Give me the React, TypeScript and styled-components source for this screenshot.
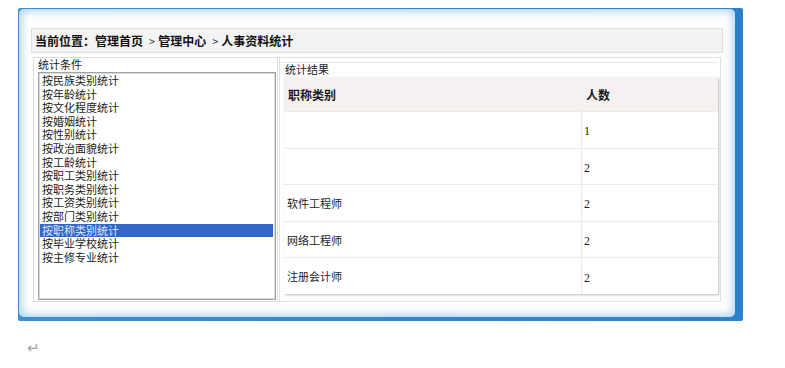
import React from "react";
import styled, { createGlobalStyle } from "styled-components";

const GlobalStyle = createGlobalStyle`
  body {
    margin: 0;
    background: #ffffff;
    font-family: "Noto Sans CJK SC", "DejaVu Sans", sans-serif;
    color: #1a1a1a;
  }
`;

const Page = styled.div`
  padding: 8px 0 0 18px;
`;

const Frame = styled.div`
  width: 725px;
  height: 313px;
  box-sizing: border-box;
  background: linear-gradient(90deg, #3a8fd6 0%, #2b80cc 100%);
  padding: 1px 8px 4px 1px;
  border-radius: 2px;
`;

const Inner = styled.div`
  height: 100%;
  box-sizing: border-box;
  background: #ffffff;
  border-radius: 5px;
  box-shadow: inset 0 0 10px 2px rgba(120, 180, 235, 0.65);
  padding: 19px 12px 15px 12px;
  display: flex;
  flex-direction: column;
  gap: 4px;
`;

const Breadcrumb = styled.div`
  height: 25px;
  box-sizing: border-box;
  border: 1px solid #dedcdc;
  background: #f4f3f4;
  padding-left: 3px;
  display: flex;
  align-items: center;
  font-size: 12px;
  font-weight: bold;
  color: #111;
  white-space: pre;
`;

const Arrow = styled.span`
  font-weight: normal;
  font-size: 11px;
  color: #333;
  margin: 0 3px 0 6px;
`;

const Panels = styled.div`
  flex: 1;
  display: flex;
  gap: 1px;
  padding: 0 2px;
  min-height: 0;
`;

const LeftPanel = styled.div`
  width: 245px;
  box-sizing: border-box;
  border: 1px solid #dcdcdc;
  display: flex;
  flex-direction: column;
  padding: 0 1px 1px 4px;
`;

const Legend = styled.div<{ $indent?: number }>`
  font-size: 11px;
  line-height: 13px;
  height: 14px;
  padding-left: ${(p) => p.$indent ?? 0}px;
  color: #222;
`;

const ListBox = styled.div`
  flex: 1;
  background: #ffffff;
  border: 1px solid #a4a4a4;
  box-shadow: inset 0 0 0 1px #d8d8d8;
  padding: 1px 2px 1px 1px;
`;

const ListItem = styled.div<{ $selected?: boolean }>`
  font-size: 11px;
  line-height: 13.6px;
  height: 13.6px;
  padding-left: 2px;
  background: ${(p) => (p.$selected ? "#3266c7" : "transparent")};
  color: ${(p) => (p.$selected ? "#dfe7f8" : "#1c1c1c")};
  white-space: nowrap;
`;

const RightPanel = styled.div`
  flex: 1;
  box-sizing: border-box;
  border: 1px solid #e0e0e0;
  padding: 4px 2px 8px 1px;
`;

const ResultBox = styled.div`
  height: 100%;
  box-sizing: border-box;
  border-top: 1px solid #e6e6e6;
  background: #ffffff;
  padding-left: 3px;
`;

const Table = styled.table`
  width: 434px;
  border-collapse: collapse;
  box-shadow: 1px 1px 2px #b8b8b8;
`;

const HeadCell = styled.th<{ $w?: number }>`
  height: 34px;
  padding: 0 4px;
  background: #f5f1f1;
  text-align: left;
  font-size: 12px;
  font-weight: bold;
  width: ${(p) => (p.$w ? `${p.$w}px` : "auto")};
  border-right: 1px solid #f5f1f1;
`;

const Row = styled.tr`
  height: 36.6px;
  border-top: 1px solid #efeae6;
`;

const NameCell = styled.td`
  padding: 0 3px;
  font-size: 11px;
  color: #222;
  border-right: 1px solid #eeeaea;
  vertical-align: middle;
`;

const CountCell = styled.td`
  padding: 4px 2px 0 2px;
  font-family: "Liberation Serif", serif;
  font-size: 12px;
  color: #222;
  vertical-align: middle;
`;

const ReturnMark = styled.div`
  margin: 19px 0 0 9px;
  font-size: 15px;
  line-height: 16px;
  color: #a0a0a0;
  font-family: "DejaVu Sans", sans-serif;
`;

const options = [
  "按民族类别统计",
  "按年龄统计",
  "按文化程度统计",
  "按婚姻统计",
  "按性别统计",
  "按政治面貌统计",
  "按工龄统计",
  "按职工类别统计",
  "按职务类别统计",
  "按工资类别统计",
  "按部门类别统计",
  "按职称类别统计",
  "按毕业学校统计",
  "按主修专业统计",
];

const results = [
  { name: "", count: 1 },
  { name: "", count: 2 },
  { name: "软件工程师", count: 2 },
  { name: "网络工程师", count: 2 },
  { name: "注册会计师", count: 2 },
];

export default function App() {
  const selected = "按职称类别统计";
  return (
    <>
      <GlobalStyle />
      <Page>
        <Frame>
          <Inner>
            <Breadcrumb>
              当前位置：管理首页<Arrow>&gt;</Arrow>管理中心<Arrow>&gt;</Arrow>人事资料统计
            </Breadcrumb>
            <Panels>
              <LeftPanel>
                <Legend>统计条件</Legend>
                <ListBox>
                  {options.map((o) => (
                    <ListItem key={o} $selected={o === selected}>
                      {o}
                    </ListItem>
                  ))}
                </ListBox>
              </LeftPanel>
              <RightPanel>
                <ResultBox>
                  <Legend $indent={1}>统计结果</Legend>
                  <Table>
                    <thead>
                      <tr>
                        <HeadCell $w={289}>职称类别</HeadCell>
                        <HeadCell>人数</HeadCell>
                      </tr>
                    </thead>
                    <tbody>
                      {results.map((r, i) => (
                        <Row key={i}>
                          <NameCell>{r.name}</NameCell>
                          <CountCell>{r.count}</CountCell>
                        </Row>
                      ))}
                    </tbody>
                  </Table>
                </ResultBox>
              </RightPanel>
            </Panels>
          </Inner>
        </Frame>
        <ReturnMark>↵</ReturnMark>
      </Page>
    </>
  );
}
